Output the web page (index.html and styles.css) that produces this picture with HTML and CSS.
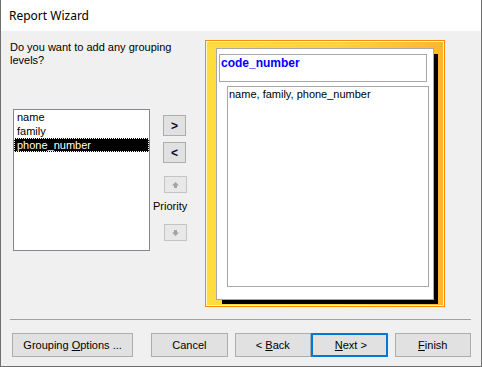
FILE: index.html
```html
<!DOCTYPE html>
<html lang="en">
<head>
    <meta charset="UTF-8">
    <title>Report Wizard</title>
    <link rel="stylesheet" href="styles.css">
</head>
<body>
    <div class="window">
        <div class="titlebar">Report Wizard</div>

        <div class="main">
            <div class="left">
                <p class="question">Do you want to add any grouping levels?</p>
                <div class="pick-row">
                    <div class="listbox">
                        <div class="item">name</div>
                        <div class="item">family</div>
                        <div class="item selected">phone_number</div>
                    </div>
                    <div class="move-col">
                        <button class="btn-small move-add">&gt;</button>
                        <button class="btn-small move-remove">&lt;</button>
                        <button class="btn-small arrow up" disabled>
                            <svg width="7" height="6" viewBox="0 0 7 6"><path d="M3.5 0 L7 3.5 L5 3.5 L5 6 L2 6 L2 3.5 L0 3.5 Z" fill="#a3a3a3"/></svg>
                        </button>
                        <span class="priority">Priority</span>
                        <button class="btn-small arrow down" disabled>
                            <svg width="7" height="6" viewBox="0 0 7 6"><path d="M3.5 6 L7 2.5 L5 2.5 L5 0 L2 0 L2 2.5 L0 2.5 Z" fill="#a3a3a3"/></svg>
                        </button>
                    </div>
                </div>
            </div>

            <div class="preview">
                <div class="page">
                    <div class="group-head">code_number</div>
                    <div class="group-detail">name, family, phone_number</div>
                </div>
            </div>
        </div>

        <div class="footer">
            <div class="separator"></div>
            <div class="buttons">
                <button class="btn btn-options">Grouping <u>O</u>ptions ...</button>
                <button class="btn btn-cancel">Cancel</button>
                <button class="btn btn-back">&lt; <u>B</u>ack</button>
                <button class="btn btn-next">&nbsp;<u>N</u>ext &gt;</button>
                <button class="btn btn-finish"><u>F</u>inish</button>
            </div>
        </div>
    </div>
</body>
</html>
```

FILE: styles.css
```css
* { box-sizing: border-box; }
body { margin: 0; font-family: "Liberation Sans", Arial, sans-serif; font-size: 11px; color: #000; }

.window { width: 482px; height: 367px; background: #f0f0f0; border: 1px solid #707070; border-top: none; display: flex; flex-direction: column; }
.titlebar { height: 31px; background: #fff; padding-left: 8px; font-family: "Noto Sans", "Open Sans", sans-serif; font-size: 12px; line-height: 31px; }

.main { height: 288px; display: flex; padding: 9px 0 0 9px; }
.left { width: 195px; }
.question { margin: 0; padding-top: 1px; width: 185px; line-height: 13px; }
.pick-row { display: flex; align-items: flex-start; margin-top: 42px; padding-left: 3px; }

.listbox { width: 137px; height: 142px; background: #fff; border: 1px solid #828790; }
.item { height: 14px; line-height: 12px; padding-left: 2px; border: 1px solid transparent; }
.item.selected { background: #000; color: #fff; border: 1px dotted #fff; }

.move-col { display: flex; flex-direction: column; align-items: flex-start; margin-left: 13px; padding-top: 6px; }
.btn-small { width: 23px; height: 21px; padding: 0; background: #e1e1e1; border: 1px solid #adadad; font-family: "Liberation Sans", Arial, sans-serif; font-size: 12px; font-weight: bold; color: #0a0a30; }
.move-remove { margin-top: 6px; }
.arrow { height: 17px; margin-left: 1px; background: #e8e8e8; border-color: #c4c4c4; display: flex; align-items: center; justify-content: center; }
.arrow.up { margin-top: 13px; }
.priority { margin: 7px 0 0 -10px; line-height: 13px; }
.arrow.down { margin-top: 11px; }

.preview { width: 240px; height: 267px; margin-left: 0; padding: 7px 0 0 10px; border: 1px solid #ff8a00; box-shadow: inset 0 0 0 1px #fff6d0; background: linear-gradient(90deg, #ffdd3e, #ffd53a 55%, #fbb72d); }
.page { width: 218px; height: 252px; background: #fff; border: 1px solid #a8a8a8; box-shadow: 5px 5px 0 -1px #000; padding: 5px 0 0 2px; }
.group-head { width: 208px; height: 28px; border: 1px solid #a8a8a8; padding: 1px 0 0 1px; color: #0000ff; font-weight: bold; font-size: 12px; line-height: 15px; }
.group-detail { width: 202px; height: 201px; margin: 4px 0 0 8px; border: 1px solid #a8a8a8; padding: 1px 0 0 1px; line-height: 13px; }

.footer { padding: 0 10px 9px 9px; }
.separator { height: 1px; background: #a0a0a0; }
.buttons { display: flex; margin-top: 13px; }
.btn { height: 24px; padding: 0; background: #e1e1e1; border: 1px solid #adadad; font-family: "Liberation Sans", Arial, sans-serif; font-size: 11px; color: #000; }
.btn-options { width: 122px; margin-left: 2px; }
.btn-cancel { width: 77px; margin-left: 18px; }
.btn-back { width: 77px; margin-left: 7px; }
.btn-next { width: 77px; margin-left: 0; border: 2px solid #0078d7; }
.btn-finish { width: 77px; margin-left: 7px; }
```
